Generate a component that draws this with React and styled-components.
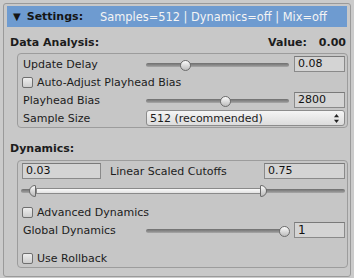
import React from 'react'
import styled, { createGlobalStyle } from 'styled-components'

const GlobalStyle = createGlobalStyle`
  html, body {
    margin: 0;
    padding: 0;
    background: #cbcbcb;
  }
  body {
    font-family: "DejaVu Sans", Verdana, sans-serif;
    font-size: 11px;
    color: #1c1c1c;
  }
`

const Panel = styled.div`
  margin: 3px 3px 0 3px;
  height: 274px;
  box-sizing: border-box;
  border: 1px solid #9a9a9a;
  border-radius: 3px;
  background: #c8c8c8;
  padding: 2px 3px 7px;
`

const Header = styled.div`
  height: 21px;
  display: flex;
  align-items: center;
  padding-left: 6px;
  background: #6e9bd0;
  white-space: nowrap;
`

const Arrow = styled.span`
  font-size: 10px;
  font-weight: bold;
  color: #151515;
  margin-right: 6px;
`

const Title = styled.span`
  font-weight: bold;
  color: #151515;
`

const Summary = styled.span`
  margin-left: 17px;
  font-size: 11.4px;
  color: #f4f4f4;
`

const SectionHead = styled.div`
  box-sizing: border-box;
  height: ${p => p.$h}px;
  padding: ${p => p.$top}px 1px 0 3px;
  display: flex;
  align-items: center;
  justify-content: space-between;
  font-weight: bold;
`

const ValueNum = styled.span`
  margin-left: 12px;
`

const Box = styled.div`
  margin: 0 -1px 0 10px;
  border: 1px solid #9c9c9c;
  border-radius: 4px;
  background: #c6c6c6;
  padding: 1px 2px 0 5px;
`

const Row = styled.div`
  height: ${p => p.$h || 18}px;
  margin-top: ${p => p.$mt || 0}px;
  display: flex;
  align-items: center;
  white-space: nowrap;
`

const Label = styled.span`
  flex: 0 0 ${p => p.$w || 123}px;
  margin-left: ${p => p.$ml || 0}px;
`

const Track = styled.div`
  position: relative;
  flex: 1;
  height: 16px;
  &::before {
    content: '';
    position: absolute;
    left: 0;
    right: 0;
    top: 50%;
    height: 4px;
    margin-top: -1px;
    border-radius: 2px;
    background: linear-gradient(#6f6f6f, #8c8c8c 60%, #a9a9a9);
  }
`

const Knob = styled.div`
  position: absolute;
  top: 50%;
  left: ${p => p.$pos}%;
  width: 11px;
  height: 11px;
  margin: -4px 0 0 -6px;
  box-sizing: border-box;
  border-radius: 50%;
  border: 1px solid #6c6c6c;
  background: linear-gradient(#fbfbfb, #d8d8d8 55%, #bdbdbd);
`

const Field = styled.div`
  flex: 0 0 ${p => p.$w}px;
  margin-left: ${p => p.$ml || 0}px;
  height: 16px;
  box-sizing: border-box;
  border: 1px solid #8a8a8a;
  border-top-color: #7a7a7a;
  background: #d4d4d4;
  padding-left: 3px;
  line-height: 14px;
  font-size: ${p => p.$fs || 11}px;
  color: #111;
`

const Check = styled.span`
  flex: 0 0 11px;
  height: 11px;
  box-sizing: border-box;
  margin: 0 4px 0 -1px;
  border: 1px solid #6f6f6f;
  border-radius: 2px;
  background: linear-gradient(#ededed, #cdcdcd);
`

const Dropdown = styled.div`
  flex: 1;
  height: 16px;
  box-sizing: border-box;
  border: 1px solid #8c8c8c;
  border-radius: 3px;
  background: linear-gradient(#f5f5f5, #dcdcdc);
  display: flex;
  align-items: center;
  justify-content: space-between;
  padding: 0 5px 0 3px;
`

const RangeTrack = styled.div`
  position: relative;
  flex: 1;
  height: 20px;
  margin: 0 0 0 -2px;
  &::before {
    content: '';
    position: absolute;
    left: 0;
    right: 0;
    top: 9px;
    height: 4px;
    border-radius: 2px;
    background: linear-gradient(#6e6e6e, #8e8e8e 60%, #a8a8a8);
  }
`

const Range = styled.div`
  position: absolute;
  top: 8px;
  left: ${p => p.$from}px;
  width: ${p => p.$to - p.$from}px;
  height: 6px;
  box-sizing: border-box;
  border: 1px solid #8a8a8a;
  background: linear-gradient(#fafafa, #e2e2e2);
`

const RangeThumb = styled.div`
  position: absolute;
  top: 5px;
  left: ${p => p.$at}px;
  width: 7px;
  height: 12px;
  box-sizing: border-box;
  border: 1px solid #6a6a6a;
  border-radius: ${p => (p.$side === 'left' ? '6px 1px 1px 6px' : '1px 6px 6px 1px')};
  background: linear-gradient(#fbfbfb, #d6d6d6 55%, #bcbcbc);
`

function UpDown() {
  return (
    <svg width="5" height="9" viewBox="0 0 5 9">
      <path d="M2.5 0 L5 3.2 L0 3.2 Z" fill="#222" />
      <path d="M2.5 9 L5 5.8 L0 5.8 Z" fill="#222" />
    </svg>
  )
}

function SliderRow({ label, pos, value }) {
  return (
    <Row>
      <Label>{label}</Label>
      <Track>
        <Knob $pos={pos} />
      </Track>
      <Field $w={51} $ml={5}>{value}</Field>
    </Row>
  )
}

function CheckRow({ label, mt }) {
  return (
    <Row $mt={mt}>
      <Check />
      <span>{label}</span>
    </Row>
  )
}

export default function App() {
  return (
    <>
      <GlobalStyle />
      <Panel>
        <Header>
          <Arrow>▼</Arrow>
          <Title>Settings:</Title>
          <Summary>Samples=512 | Dynamics=off | Mix=off</Summary>
        </Header>

        <SectionHead $h={26} $top={4}>
          <span>Data Analysis:</span>
          <span>
            Value:<ValueNum>0.00</ValueNum>
          </span>
        </SectionHead>
        <Box>
          <SliderRow label="Update Delay" pos={28} value="0.08" />
          <CheckRow label="Auto-Adjust Playhead Bias" />
          <SliderRow label="Playhead Bias" pos={56} value="2800" />
          <Row>
            <Label>Sample Size</Label>
            <Dropdown>
              <span>512 (recommended)</span>
              <UpDown />
            </Dropdown>
          </Row>
        </Box>

        <SectionHead $h={32} $top={8}>
          <span>Dynamics:</span>
        </SectionHead>
        <Box>
          <Row>
            <Field $w={79} $ml={-1}>0.03</Field>
            <Label $w={154} $ml={9}>Linear Scaled Cutoffs</Label>
            <Field $w={81}>0.75</Field>
          </Row>
          <Row $h={20}>
            <RangeTrack>
              <RangeThumb $side="left" $at={8} />
              <Range $from={15} $to={240} />
              <RangeThumb $side="right" $at={239} />
            </RangeTrack>
          </Row>
          <CheckRow label="Advanced Dynamics" mt={3} />
          <Row>
            <Label>Global Dynamics</Label>
            <Track>
              <Knob $pos={97} />
            </Track>
            <Field $w={51} $ml={5} $fs={12}>1</Field>
          </Row>
          <CheckRow label="Use Rollback" mt={10} />
        </Box>
      </Panel>
    </>
  )
}
